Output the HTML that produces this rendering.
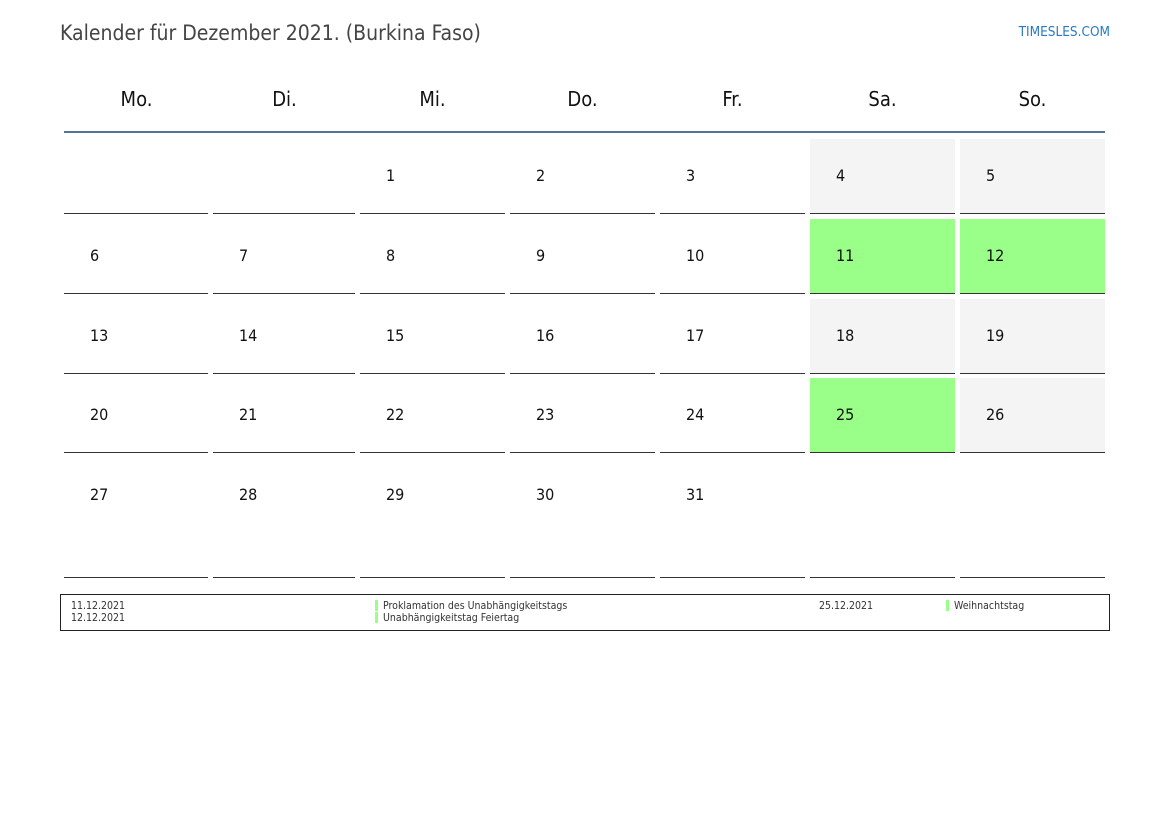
<!DOCTYPE html>
<html><head><meta charset="utf-8"><style>
body{margin:0;width:1169px;height:827px;background:#fff;position:relative;font-family:"DejaVu Sans Condensed","DejaVu Sans","Liberation Sans",sans-serif;font-stretch:condensed;overflow:hidden}
.a{position:absolute}
.t{left:60px;top:21px;font-size:21px;color:#444}
.l{right:59px;top:24px;font-size:13.5px;color:#2a7ac0}
.h{top:87px;font-size:20px;color:#111;text-align:center;width:145px}
.c{border-bottom:1px solid #333;height:74px}
.n{position:absolute;left:26px;top:27px;font-size:16px;color:#111}
.w{background:#f4f4f4}.g{background:#99ff88}
.s{font-size:10.5px;color:#333}
.b{position:absolute;width:3px;height:11px;background:#99ff88}
</style></head><body>
<div class="a t">Kalender für Dezember 2021. (Burkina Faso)</div>
<div class="a l">TIMESLES.COM</div>
<div class="a h" style="left:64px">Mo.</div>
<div class="a h" style="left:212px">Di.</div>
<div class="a h" style="left:360px">Mi.</div>
<div class="a h" style="left:510px">Do.</div>
<div class="a h" style="left:660px">Fr.</div>
<div class="a h" style="left:810px">Sa.</div>
<div class="a h" style="left:960px">So.</div>
<div class="a" style="left:64px;top:131px;width:1041px;height:2px;background:#5474a0"></div>
<div id="g"></div>
<script>
var L=[64,213,360,510,660,810,960],W=[144,142,145,145,145,145,145],T=[139,219,299,378,458],H=[74,74,74,74,119];
var d=[[0,0,1,2,3,4,5],[6,7,8,9,10,11,12],[13,14,15,16,17,18,19],[20,21,22,23,24,25,26],[27,28,29,30,31,0,0]];
var gr={11:1,12:1,25:1},h='';
for(var r=0;r<5;r++)for(var c=0;c<7;c++){var v=d[r][c];var cl='a c';
if(v&&gr[v])cl+=' g';else if(v&&c>4)cl+=' w';
h+='<div class="'+cl+'" style="left:'+L[c]+'px;top:'+T[r]+'px;width:'+W[c]+'px;height:'+H[r]+'px">'+(v?'<span class="n">'+v+'</span>':'')+'</div>';}
document.getElementById('g').innerHTML=h;
</script>
<div class="a" style="left:60px;top:594px;width:1048px;height:35px;border:1px solid #222"></div>
<div class="a s" style="left:71px;top:600px">11.12.2021</div>
<div class="a s" style="left:71px;top:612px">12.12.2021</div>
<div class="b" style="left:375px;top:600px"></div>
<div class="b" style="left:375px;top:612px"></div>
<div class="a s" style="left:383px;top:600px">Proklamation des Unabhängigkeitstags</div>
<div class="a s" style="left:383px;top:612px">Unabhängigkeitstag Feiertag</div>
<div class="a s" style="left:819px;top:600px">25.12.2021</div>
<div class="b" style="left:946px;top:600px"></div>
<div class="a s" style="left:954px;top:600px">Weihnachtstag</div>
</body></html>
